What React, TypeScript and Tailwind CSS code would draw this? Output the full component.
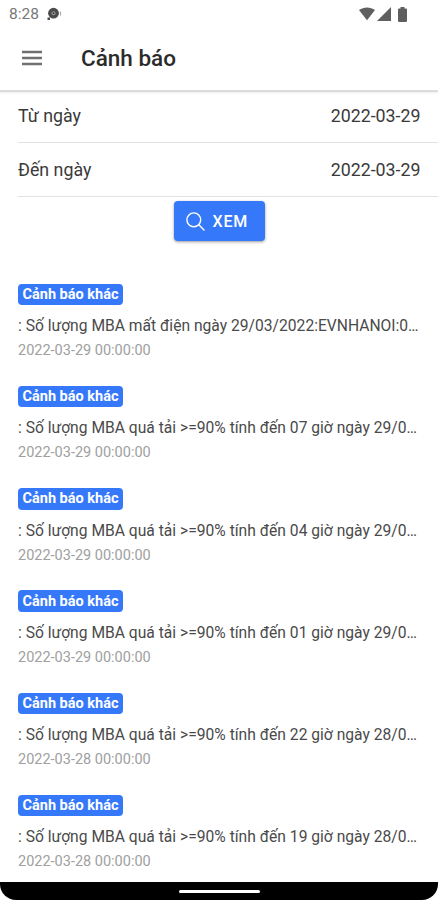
type Alert = {
  tag: string;
  message: string;
  time: string;
};

const ALERTS: Alert[] = [
  { tag: "Cảnh báo khác", message: ": Số lượng MBA mất điện ngày 29/03/2022:EVNHANOI:0…", time: "2022-03-29 00:00:00" },
  { tag: "Cảnh báo khác", message: ": Số lượng MBA quá tải >=90% tính đến 07 giờ ngày 29/0…", time: "2022-03-29 00:00:00" },
  { tag: "Cảnh báo khác", message: ": Số lượng MBA quá tải >=90% tính đến 04 giờ ngày 29/0…", time: "2022-03-29 00:00:00" },
  { tag: "Cảnh báo khác", message: ": Số lượng MBA quá tải >=90% tính đến 01 giờ ngày 29/0…", time: "2022-03-29 00:00:00" },
  { tag: "Cảnh báo khác", message: ": Số lượng MBA quá tải >=90% tính đến 22 giờ ngày 28/0…", time: "2022-03-28 00:00:00" },
  { tag: "Cảnh báo khác", message: ": Số lượng MBA quá tải >=90% tính đến 19 giờ ngày 28/0…", time: "2022-03-28 00:00:00" },
];

function StatusBar() {
  return (
    <div className="flex h-7 shrink-0 items-center pl-[9px] pr-[30px] text-[#5f5f5f]">
      <span className="text-[15.5px] leading-7 text-[#777]">8:28</span>
      <svg className="ml-[7px] h-[14px] w-4" viewBox="0 0 16 14">
        <circle cx="7.5" cy="6.2" r="5.4" fill="#4b4b4b" />
        <circle cx="7.5" cy="6.2" r="2" fill="#999" />
        <circle cx="7.5" cy="6.2" r="0.9" fill="#333" />
        <path d="M1.5 10.5h2.5v2.5H1.5z" fill="#4b4b4b" />
        <path d="M14.5 4.5v4" stroke="#aaa" strokeWidth="1.2" />
      </svg>
      <div className="ml-auto flex items-center">
        <svg className="h-[14px] w-4" viewBox="0 0 16 14" fill="currentColor">
          <path d="M0 3C4.8-.4 11.2-.4 16 3L8 13.2z" />
        </svg>
        <svg className="ml-[2px] h-[14px] w-[14px]" viewBox="0 0 14 14" fill="currentColor">
          <path d="M14 0v14H0z" />
        </svg>
        <svg className="ml-[7px] mr-px h-[15px] w-[9px]" viewBox="0 0 9 15" fill="currentColor">
          <path d="M2.5 0h4v1.5H8q1 0 1 1V14q0 1-1 1H1q-1 0-1-1V2.5q0-1 1-1h1.5z" />
        </svg>
      </div>
    </div>
  );
}

function Header() {
  return (
    <header className="flex h-[64px] shrink-0 items-center border-b-2 border-[#dcdcdc] pl-[22px] shadow-[0_1px_2px_rgba(0,0,0,0.08)]">
      <button className="pb-[2px]" aria-label="Menu">
        <svg className="h-4 w-5" viewBox="0 0 20 16" stroke="#707070" strokeWidth="2.5">
          <path d="M0 2h20M0 8h20M0 14h20" />
        </svg>
      </button>
      <h1 className="ml-[39px] pb-[3px] text-[22.5px] font-medium leading-7 text-[#2b2b2b]">Cảnh báo</h1>
    </header>
  );
}

function DateRow({ label, value }: { label: string; value: string }) {
  return (
    <div className="ml-[18px] flex items-end justify-between border-b border-[#e2e2e2] pb-[13px] pr-[17.5px] text-[17.8px] leading-[26px] text-[#3a3a3a]">
      <span>{label}</span>
      <span>{value}</span>
    </div>
  );
}

function AlertItem({ alert }: { alert: Alert }) {
  return (
    <li className="h-[102.25px] pr-4">
      <span className="flex h-[21.5px] w-[105px] items-center justify-center rounded bg-[#3579fa] pt-px text-[14.5px] font-bold leading-5 text-white">
        {alert.tag}
      </span>
      <p className="mt-[9px] whitespace-nowrap text-[15.64px] leading-6 text-[#4a4a4a]">{alert.message}</p>
      <p className="mt-[2px] text-[14.5px] leading-[22px] text-[#a0a0a0]">{alert.time}</p>
    </li>
  );
}

export default function App() {
  return (
    <div className="flex h-[900px] w-[438px] flex-col overflow-hidden bg-white font-['Roboto',sans-serif]">
      <StatusBar />
      <Header />
      <main className="min-h-0 flex-1 overflow-hidden">
        <div className="grid grid-rows-[51px_54px]">
          <DateRow label="Từ ngày" value="2022-03-29" />
          <DateRow label="Đến ngày" value="2022-03-29" />
        </div>
        <button className="mx-auto mt-1 flex h-10 w-[91px] items-center rounded-[4px] bg-[#3579fa] pl-3 text-white shadow-[0_1px_3px_rgba(0,0,0,0.4)]">
          <svg className="h-[19px] w-[19px]" viewBox="0 0 19 19" fill="none" stroke="currentColor" strokeWidth="1.4" strokeLinecap="round">
            <circle cx="7.8" cy="7.8" r="6.9" />
            <path d="M12.8 12.8l5.2 5.2" />
          </svg>
          <span className="ml-[8px] pt-px text-base font-medium tracking-[0.8px]">XEM</span>
        </button>
        <ul className="mt-[42.5px] pl-[18px]">
          {ALERTS.map((alert, i) => (
            <AlertItem key={i} alert={alert} />
          ))}
        </ul>
      </main>
      <footer className="flex h-[18px] shrink-0 items-center justify-center rounded-b-[16px] bg-black">
        <span className="mt-px h-[3px] w-[81px] rounded-full bg-white" />
      </footer>
    </div>
  );
}
